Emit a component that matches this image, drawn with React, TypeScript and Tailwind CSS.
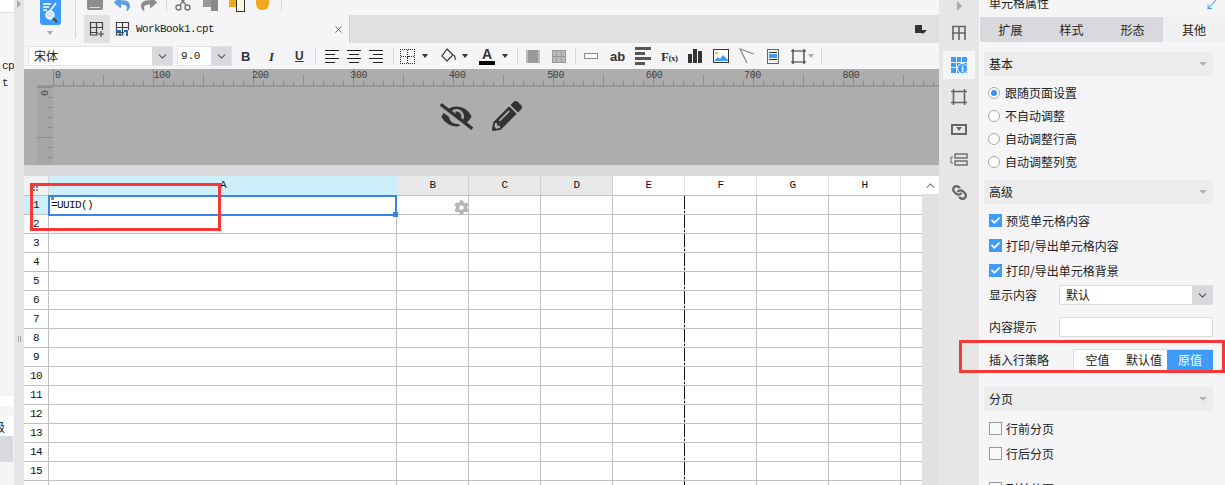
import React from 'react';
import { FaEyeSlash, FaPencilAlt, FaReply, FaShare, FaCog, FaLink, FaCheck } from 'react-icons/fa';
import { ChevronDown, ChevronUp, X } from 'lucide-react';

const rowNumbers = Array.from({ length: 16 }, (_, i) => i + 1);
const smallCols = ['B', 'C', 'D', 'E', 'F', 'G', 'H'];

const Caret = ({ className = 'border-t-[#333]' }: { className?: string }) => (
    <span className={`block w-0 h-0 border-x-[3px] border-x-transparent border-t-[4px] ${className}`} />
);

const Sep = ({ h = 'h-[24px]' }: { h?: string }) => <span className={`w-px bg-[#d5d5d8] ${h}`} />;

const TopRuler = () => (
    <svg width="886" height="18" className="block">
        {Array.from({ length: 89 }, (_, i) => {
            const x = i * 10 + 0.5;
            const h = i % 10 === 0 ? 16 : i % 5 === 0 ? 10 : 4;
            return <line key={i} x1={x} x2={x} y1={16 - h} y2={16} stroke="#8a8a8a" />;
        })}
    </svg>
);

const LeftRuler = () => (
    <svg width="16" height="79" className="block">
        {Array.from({ length: 8 }, (_, i) => (
            <line key={i} x1={i % 5 === 0 ? 0 : 11} x2={16} y1={i * 10 + 0.5} y2={i * 10 + 0.5} stroke="#8a8a8a" />
        ))}
    </svg>
);

const GridIcon = ({ color = '#666', plus = false, badge = false }: { color?: string; plus?: boolean; badge?: boolean }) => (
    <svg width="16" height="16" viewBox="0 0 16 16" fill="none" stroke={color} strokeWidth="1.2">
        <path d="M1 1.5h13M1 6.5h13M1 11.5h8M1.5 1v13h7M7.5 1v13M13.5 1v8" />
        {plus && <path d="M12 10v6M9 13h6" stroke="#444" />}
        {badge && <path d="M1 9h5v6H4v-4H1zM9 9h4v6h-2v-4H9z" fill="#1f6fb5" stroke="none" />}
    </svg>
);

const Radio = ({ label, checked = false }: { label: string; checked?: boolean }) => (
    <div className="h-[23px] flex items-center gap-[5px] pl-[4px]">
        <span className="w-[12px] h-[12px] rounded-full border border-[#aaa] bg-white flex items-center justify-center">
            {checked && <span className="w-[6px] h-[6px] rounded-full bg-[#3f8ff0]" />}
        </span>
        <span>{label}</span>
    </div>
);

const Check = ({ label, checked = false }: { label: string; checked?: boolean }) => (
    <div className="h-[25px] flex items-center gap-[4px] pl-[5px]">
        {checked ? (
            <span className="w-[13px] h-[13px] bg-[#3f9bf8] flex items-center justify-center text-white">
                <FaCheck size={9} />
            </span>
        ) : (
            <span className="w-[13px] h-[13px] bg-[#f8f8f8] border border-[#999]" />
        )}
        <span>{label}</span>
    </div>
);

const SectionHead = ({ label }: { label: string }) => (
    <div className="h-[24px] bg-[#ececec] flex items-center justify-between pl-[5px] pr-[6px]">
        <span>{label}</span>
        <span className="w-0 h-0 border-x-[4px] border-x-transparent border-t-[4px] border-t-[#b5b5b5]" />
    </div>
);

const AlignIcon = ({ kind, className = '', wide = false }: { kind: 'left' | 'center' | 'right'; className?: string; wide?: boolean }) => {
    const w = wide ? 'w-[16px] gap-[2px]' : 'w-[14px] gap-[3px]';
    const bar = wide ? 'h-[3px] bg-[#555]' : 'h-px bg-[#222]';
    const align = kind === 'left' ? 'items-start' : kind === 'center' ? 'items-center' : 'items-end';
    return (
        <span className={`${className} ${w} flex flex-col ${align}`}>
            <span className={`w-full ${bar}`} />
            <span className={`w-[10px] ${bar}`} />
            <span className={`w-full ${bar}`} />
            <span className={`w-[10px] ${bar}`} />
        </span>
    );
};

const App = () => {
    return (
        <div
            className="relative w-[1225px] h-[485px] overflow-hidden flex bg-[#f5f5f7] text-[12px] leading-none text-[#222]"
            style={{ fontFamily: '"Noto Sans CJK SC", sans-serif' }}
        >
            {/* left edge */}
            <div className="w-[14px] shrink-0 flex flex-col bg-[#f5f5f7] overflow-hidden">
                <div className="h-[13px] bg-white border-b border-[#e2e2e2] shrink-0" />
                <div className="pt-[45px] font-['Liberation_Mono',monospace] text-[11px] tracking-[-0.6px] pl-[2px] leading-[17px] shrink-0 h-[383px]">
                    <div>cp</div>
                    <div>t</div>
                </div>
                <div className="h-[10px] bg-white shrink-0" />
                <div className="h-[10px] shrink-0" />
                <div className="h-[20px] bg-white shrink-0 overflow-hidden text-[12px] -ml-[7px] pt-[5px]">级</div>
                <div className="h-[26px] bg-[#d8d9dc] w-[13px] shrink-0" />
            </div>
            <div className="w-[10px] shrink-0 bg-[#e5e5e5] flex flex-col items-center">
                <span className="w-0 h-0 border-y-[4px] border-y-transparent border-l-[4px] border-l-[#aaa]" />
                <span className="mt-[328px] flex gap-px">
                    <span className="w-px h-[6px] bg-[#aaa]" />
                    <span className="w-px h-[6px] bg-[#aaa]" />
                </span>
            </div>

            {/* main column */}
            <div className="w-[915px] shrink-0 flex flex-col">
                <div className="h-[43px] flex shrink-0">
                    <div className="w-[60px] flex shrink-0">
                        <div className="w-[51px] flex flex-col items-center">
                            <div className="w-[21px] h-[25px] bg-[#3f9bf8] rounded-b-[3px] flex items-center justify-center ml-[1px]">
                                <svg width="18" height="23" viewBox="0 0 18 23" fill="none" stroke="white" strokeWidth="1.4">
                                    <path d="M2 3h8M2 6h6M2 9h4M9 10l6-8" />
                                    <circle cx="9" cy="14" r="4" fill="#cfe6fb" />
                                    <path d="M12 17l4 4" stroke="#444" strokeWidth="1.8" />
                                </svg>
                            </div>
                            <span className="mt-[6px]">
                                <Caret className="border-t-[#aaa]" />
                            </span>
                        </div>
                        <span className="w-px h-[38px] bg-[#d5d5d8]" />
                    </div>
                    <div className="flex-1 flex flex-col">
                        <div className="h-[15px] flex items-start overflow-hidden">
                            <span className="ml-[3px] w-[16px] h-[10px] bg-[#8d8d8d] rounded-b-[2px] flex flex-col justify-end pb-[2px] px-[3px]">
                                <span className="h-px bg-[#ddd]" />
                            </span>
                            <span className="ml-[11px] w-[16px] h-[12px] text-[#5a9ee8] overflow-hidden flex items-end">
                                <FaReply size={16} />
                            </span>
                            <span className="ml-[11px] w-[16px] h-[12px] text-[#8d8d8d] overflow-hidden flex items-end">
                                <FaShare size={16} />
                            </span>
                            <span className="ml-[9px] w-px h-[11px] bg-[#d5d5d8]" />
                            <svg className="ml-[8px]" width="16" height="11" viewBox="0 0 16 11" fill="none" stroke="#777" strokeWidth="1.4">
                                <circle cx="3.5" cy="7.5" r="2.5" />
                                <circle cx="12.5" cy="7.5" r="2.5" />
                                <path d="M5 5l5-6M11 5L6-1" />
                            </svg>
                            <span className="ml-[12px] w-[15px] h-[11px] flex">
                                <span className="w-[8px] h-[7px] bg-[#999]" />
                                <span className="w-[7px] h-[11px] bg-[#888]" />
                            </span>
                            <span className="ml-[11px] w-[16px] h-[12px] flex">
                                <span className="w-[7px] h-[7px] bg-[#f0a81e]" />
                                <span className="w-[9px] h-[12px] bg-[#fdf6e0] border border-t-0 border-[#333]" />
                            </span>
                            <span className="ml-[11px] w-[13px] h-[10px] bg-[#f0a81e] rounded-b-[6px]" />
                            <span className="ml-[12px] w-px h-[11px] bg-[#d5d5d8]" />
                        </div>
                        <div className="h-[28px] flex bg-[#e0e0e2]">
                            <div className="w-[26px] bg-[#dfe0e2] flex items-center justify-center">
                                <GridIcon color="#444" plus />
                            </div>
                            <div className="w-[240px] bg-[#f5f5f7] flex items-center pl-[5px] pr-[5px] border-r border-[#ccc]">
                                <GridIcon color="#444" badge />
                                <span className="ml-[5px] flex-1 font-['Liberation_Mono',monospace] text-[11px] tracking-[-0.6px]">
                                    WorkBook1.cpt
                                </span>
                                <X size={11} strokeWidth={1.8} className="text-[#444]" />
                            </div>
                            <div className="flex-1 flex items-center justify-end pr-[12px]">
                                <span className="relative w-[12px] h-[9px]">
                                    <span className="absolute left-0 top-0 w-[7px] h-[8px] bg-[#333]" />
                                    <span className="absolute right-0 bottom-0 w-0 h-0 border-x-[4px] border-x-transparent border-t-[4px] border-t-[#333]" />
                                </span>
                            </div>
                        </div>
                    </div>
                </div>

                {/* format toolbar */}
                <div className="h-[26px] shrink-0 flex items-center pl-[4px] text-[#333]">
                    <div className="w-[145px] h-[20px] bg-white flex border border-[#e2e2e2] items-center">
                        <span className="flex-1 pl-[5px] text-[12px] text-[#222]">宋体</span>
                        <span className="w-[20px] h-full bg-[#d8d9dc] flex items-center justify-center">
                            <ChevronDown size={13} className="text-[#555]" />
                        </span>
                    </div>
                    <div className="ml-[4px] w-[55px] h-[20px] bg-white flex border border-[#e2e2e2] items-center">
                        <span className="flex-1 pl-[3px] font-['Liberation_Mono',monospace] text-[11px] tracking-[-0.2px] text-[#222]">9.0</span>
                        <span className="w-[20px] h-full bg-[#d8d9dc] flex items-center justify-center">
                            <ChevronDown size={13} className="text-[#555]" />
                        </span>
                    </div>
                    <span className="ml-[9px] w-[10px] font-['Liberation_Sans',sans-serif] font-bold text-[13px]">B</span>
                    <span className="ml-[18px] w-[8px] font-['Liberation_Serif',serif] italic font-bold text-[13px]">I</span>
                    <span className="ml-[18px] w-[10px] font-['Liberation_Sans',sans-serif] font-bold text-[12px] underline">U</span>
                    <span className="ml-[10px]"><Sep h="h-[16px] block" /></span>
                    <AlignIcon className="ml-[9px]" kind="left" />
                    <AlignIcon className="ml-[8px]" kind="center" />
                    <AlignIcon className="ml-[8px]" kind="right" />
                    <span className="ml-[10px]"><Sep h="h-[16px] block" /></span>
                    <span className="ml-[6px] w-[15px] h-[15px] border border-dotted border-[#333] grid grid-cols-2">
                        <span className="border-r border-b border-dotted border-[#333]" />
                        <span className="border-b border-dotted border-[#333]" />
                        <span className="border-r border-dotted border-[#333]" />
                        <span />
                    </span>
                    <span className="ml-[7px]"><Caret /></span>
                    <svg className="ml-[13px]" width="16" height="17" viewBox="0 0 16 17" fill="none" stroke="#333" strokeWidth="1.2">
                        <path d="M6 1l-5 7 5 5 6-6z" />
                        <path d="M13 7c1 2 2 3 1 5" />
                        <rect x="0" y="15" width="16" height="2" fill="white" stroke="none" />
                    </svg>
                    <span className="ml-[5px]"><Caret /></span>
                    <span className="ml-[11px] w-[16px] flex flex-col items-center">
                        <span className="font-['Liberation_Sans',sans-serif] font-bold text-[14px] leading-[13px]">A</span>
                        <span className="w-[16px] h-[4px] bg-black" />
                    </span>
                    <span className="ml-[7px]"><Caret /></span>
                    <span className="ml-[9px]"><Sep h="h-[16px] block" /></span>
                    <span className="ml-[8px] w-[14px] h-[13px] bg-[#999] border-x-[2px] border-[#bbb]" />
                    <span className="ml-[12px] w-[14px] h-[13px] bg-[#999] grid grid-cols-3 gap-px p-px">
                        {Array.from({ length: 6 }, (_, i) => <span key={i} className="bg-[#bbb]" />)}
                    </span>
                    <span className="ml-[9px]"><Sep h="h-[16px] block" /></span>
                    <span className="ml-[8px] w-[14px] h-[6px] border border-[#888] bg-white" />
                    <span className="ml-[12px] w-[14px] font-['Liberation_Sans',sans-serif] font-bold text-[13px] text-[#333]">ab</span>
                    <AlignIcon className="ml-[11px]" kind="left" wide />
                    <span className="ml-[10px] w-[16px] font-['Liberation_Serif',serif] font-bold text-[13px] whitespace-nowrap tracking-[-0.5px]">F<span className="text-[9px]">(x)</span></span>
                    <span className="ml-[11px] w-[14px] h-[14px] flex items-end gap-px">
                        <span className="flex-1 h-[9px] bg-[#333]" />
                        <span className="flex-1 h-[14px] bg-[#333]" />
                        <span className="flex-1 h-[12px] bg-[#333]" />
                    </span>
                    <svg className="ml-[11px]" width="16" height="14" viewBox="0 0 16 14">
                        <rect x="0.5" y="0.5" width="15" height="13" fill="white" stroke="#333" />
                        <circle cx="3.5" cy="4" r="1.3" fill="#f0b429" />
                        <path d="M1 12l4-4 2 2 3-4 5 5v1H1z" fill="#3f9bf8" />
                    </svg>
                    <svg className="ml-[10px]" width="16" height="16" viewBox="0 0 16 16" fill="none" stroke="#888" strokeWidth="1.2">
                        <path d="M15 6L1 1l7 14M1 1" />
                    </svg>
                    <span className="ml-[12px] w-[12px] h-[15px] border border-[#666] flex flex-col justify-center gap-px px-px">
                        <span className="h-px bg-[#333]" />
                        <span className="h-[4px] bg-[#3f9bf8]" />
                        <span className="h-px bg-[#333]" />
                    </span>
                    <svg className="ml-[12px]" width="15" height="15" viewBox="0 0 15 15" fill="#f0f0f0" stroke="#333" strokeWidth="1.2">
                        <path d="M2 0v15M13 0v15M0 2h15M0 13h15" />
                    </svg>
                    <span className="ml-[2px]"><Caret className="border-t-[#aaa]" /></span>
                    <span className="ml-[7px]"><Sep h="h-[16px] block" /></span>
                </div>

                {/* preview band */}
                <div className="h-[96px] shrink-0 bg-[#adadad] flex flex-col">
                    <div className="h-[18px] shrink-0 pl-[29px] relative">
                        <div className="relative w-[886px] h-[18px]">
                            <TopRuler />
                            <div className="absolute inset-0 flex font-['Liberation_Mono',monospace] text-[10px] text-[#444] tracking-[-0.4px] pt-[2px]">
                                {[0, 100, 200, 300, 400, 500, 600, 700, 800].map((n) => (
                                    <span key={n} className="w-[100px] pl-[2px]">{n}</span>
                                ))}
                            </div>
                        </div>
                        <div className="absolute left-[13px] right-0 bottom-0 h-[2px] bg-[#969696]" />
                    </div>
                    <div className="flex-1 flex min-h-0 pl-[13px]">
                        <div className="w-[16px] bg-[#a6a6a6] relative overflow-hidden shrink-0">
                            <LeftRuler />
                            <span className="absolute left-[3px] top-[1px] text-[10px] font-['Liberation_Mono',monospace] text-[#444] rotate-90">0</span>
                        </div>
                        <div className="flex-1 flex pl-[387px] gap-[19px] pt-[14px] text-[#333]">
                            <FaEyeSlash size={33} className="-mt-[1px]" />
                            <FaPencilAlt size={30} />
                        </div>
                    </div>
                </div>
                <div className="h-[11px] shrink-0 bg-[#d9d9dc]" />

                {/* sheet */}
                <div className="flex-1 flex min-h-0 relative bg-white overflow-hidden font-['Liberation_Mono',monospace] text-[11px] tracking-[-0.6px] text-[#111]">
                    <div className="w-[898px] shrink-0">
                        <div className="h-[20px] flex border-b border-[#c0c0c0]">
                            <div className="w-[25px] shrink-0 border-r border-[#d5d5d5] bg-[#f2f2f2] flex items-center justify-center pt-[5px]">
                                <span className="grid grid-cols-2 gap-[1px] -ml-[2px]">
                                    {[0, 1, 2, 3].map((i) => <span key={i} className="w-[2px] h-[2px] bg-[#888]" />)}
                                </span>
                            </div>
                            <div className="w-[348px] shrink-0 bg-[#cdeefb] flex items-center justify-center">A</div>
                            {smallCols.map((c, i) => (
                                <div
                                    key={c}
                                    className={`w-[72px] shrink-0 flex items-center justify-center border-r ${i < 3 ? 'bg-[#e8e8e8] border-[#d0d0d0]' : 'border-[#e4e4e4]'}`}
                                >
                                    {c}
                                </div>
                            ))}
                        </div>
                        {rowNumbers.map((n) => (
                            <div key={n} className="h-[19px] flex border-b border-[#c0c0c0]">
                                <div className={`w-[25px] shrink-0 border-r border-[#c0c0c0] flex items-center justify-center ${n === 1 ? 'bg-[#cdeefb]' : ''}`}>
                                    {n}
                                </div>
                                <div className="w-[348px] shrink-0 border-r border-[#c0c0c0]" />
                                {smallCols.map((c) => (
                                    <div key={c} className="w-[72px] shrink-0 border-r border-[#c0c0c0]" />
                                ))}
                            </div>
                        ))}
                    </div>
                    <div className="w-[17px] shrink-0 bg-[#e1e1e1] flex flex-col">
                        <div className="h-[18px] bg-white flex items-center justify-center">
                            <ChevronUp size={13} className="text-[#777]" />
                        </div>
                    </div>

                    {/* selection on A1 */}
                    <div className="absolute left-[24px] top-[19px] w-[349px] h-[21px] border-2 border-[#3b82e6] pl-[1px] flex items-center">
                        <span className="absolute left-[1px] top-0 w-[3px] h-[3px] bg-[#888]" />
                        <span className="text-[#111]">=UUID()</span>
                        <span className="absolute -right-[3px] -bottom-[3px] w-[5px] h-[5px] bg-[#3b82e6]" />
                    </div>
                    <FaCog size={15} className="absolute left-[430px] top-[24px] text-[#b5b5b5]" />
                    <svg className="absolute left-[660px] top-[20px]" width="1" height="290">
                        <line x1="0.5" x2="0.5" y1="0" y2="290" stroke="#111" strokeWidth="1" strokeDasharray="13 2 2 2" />
                    </svg>
                </div>
            </div>

            {/* side icon rail */}
            <div className="w-[40px] shrink-0 bg-[#e6e6e6] flex flex-col items-center text-[#666]">
                <span className="mt-[1px] w-0 h-0 border-y-[5px] border-y-transparent border-l-[5px] border-l-[#aaa]" />
                <div className="mt-[4px] h-[36px] flex items-center">
                    <svg width="16" height="16" viewBox="0 0 16 16" fill="none" stroke="#666" strokeWidth="1.6">
                        <path d="M1 1.5h14M1 8h14M2 1v14M8 1v14M14 1v14" />
                    </svg>
                </div>
                <div className="w-[32px] h-[28px] bg-[#f5f5f7] flex items-center justify-center">
                    <span className="relative w-[16px] h-[16px] grid grid-cols-3 gap-px">
                        {Array.from({ length: 9 }, (_, i) => <span key={i} className="bg-[#3f9bf8]" />)}
                        <span className="absolute -right-[1px] -bottom-[1px] w-[11px] h-[11px] rounded-full bg-[#3f9bf8] border border-[#f5f5f7] text-white text-[8px] font-bold flex items-center justify-center">i</span>
                    </span>
                </div>
                <div className="h-[36px] flex items-center">
                    <svg width="16" height="16" viewBox="0 0 16 16" fill="none" stroke="#666" strokeWidth="1.6">
                        <path d="M2.5 0v16M13.5 0v16M0 2.5h16M0 13.5h16" />
                    </svg>
                </div>
                <div className="h-[28px] flex items-center">
                    <span className="w-[16px] h-[11px] border-2 border-[#666] flex items-center justify-center">
                        <Caret className="border-t-[#666]" />
                    </span>
                </div>
                <div className="h-[34px] flex items-center">
                    <svg width="18" height="14" viewBox="0 0 18 14" fill="none" stroke="#666" strokeWidth="1.4">
                        <path d="M3 4H1v6h2" strokeWidth="1" />
                        <rect x="5" y="1" width="12" height="4" />
                        <rect x="5" y="8" width="12" height="4" />
                    </svg>
                </div>
                <div className="h-[30px] flex items-center">
                    <FaLink size={15} className="rotate-90" />
                </div>
            </div>

            {/* properties panel */}
            <div className="flex-1 min-w-0 flex flex-col">
                <div className="h-[17px] shrink-0 pl-[10px] pr-[7px] flex justify-between overflow-hidden">
                    <span className="-mt-[3px] text-[12px]">单元格属性</span>
                    <span className="text-[#3f9bf8] -mt-[3px] text-[13px]">↙</span>
                </div>
                <div className="h-[25px] shrink-0 flex ml-[1px] bg-[#d8d9dc]">
                    <div className="w-[61px] flex items-center justify-center">扩展</div>
                    <div className="w-[61px] flex items-center justify-center">样式</div>
                    <div className="w-[61px] flex items-center justify-center">形态</div>
                    <div className="flex-1 bg-[#f0f0f2] flex items-center justify-center">其他</div>
                </div>
                <div className="pl-[5px] pr-[12px] pt-[10px]">
                    <SectionHead label="基本" />
                    <div className="pt-[5px] pb-[7px]">
                        <Radio label="跟随页面设置" checked />
                        <Radio label="不自动调整" />
                        <Radio label="自动调整行高" />
                        <Radio label="自动调整列宽" />
                    </div>
                    <SectionHead label="高级" />
                    <div className="pt-[4px]">
                        <Check label="预览单元格内容" checked />
                        <Check label="打印/导出单元格内容" checked />
                        <Check label="打印/导出单元格背景" checked />
                    </div>
                    <div className="h-[20px] mt-[2px] flex items-center pl-[5px]">
                        <span className="w-[70px]">显示内容</span>
                        <div className="flex-1 h-full bg-white border border-[#ddd] flex items-center">
                            <span className="flex-1 pl-[6px]">默认</span>
                            <span className="w-[20px] h-full bg-[#d8d9dc] flex items-center justify-center">
                                <ChevronDown size={13} className="text-[#555]" />
                            </span>
                        </div>
                    </div>
                    <div className="h-[20px] mt-[12px] flex items-center pl-[5px]">
                        <span className="w-[70px]">内容提示</span>
                        <div className="flex-1 h-full bg-white border border-[#ddd]" />
                    </div>
                    <div className="h-[21px] mt-[12px] flex items-center pl-[5px]">
                        <span className="w-[84px]">插入行策略</span>
                        <div className="flex-1 h-full bg-white border-t border-l border-[#ddd] flex">
                            <span className="w-[47px] flex items-center justify-center">空值</span>
                            <span className="w-[46px] flex items-center justify-center">默认值</span>
                            <span className="flex-1 bg-[#3f9bf8] text-white flex items-center justify-center">原值</span>
                        </div>
                    </div>
                    <div className="mt-[17px]">
                        <SectionHead label="分页" />
                    </div>
                    <div className="pt-[5px]">
                        <Check label="行前分页" />
                        <Check label="行后分页" />
                        <div className="mt-[10px]">
                            <Check label="列前分页" />
                        </div>
                    </div>
                </div>
            </div>

            {/* red annotation boxes */}
            <div className="absolute left-[30px] top-[183px] w-[191px] h-[48px] border-[3px] border-[#f83838]" />
            <div className="absolute left-[959px] top-[340px] w-[266px] h-[33px] border-[3px] border-[#f83838]" />
        </div>
    );
};

export default App;
